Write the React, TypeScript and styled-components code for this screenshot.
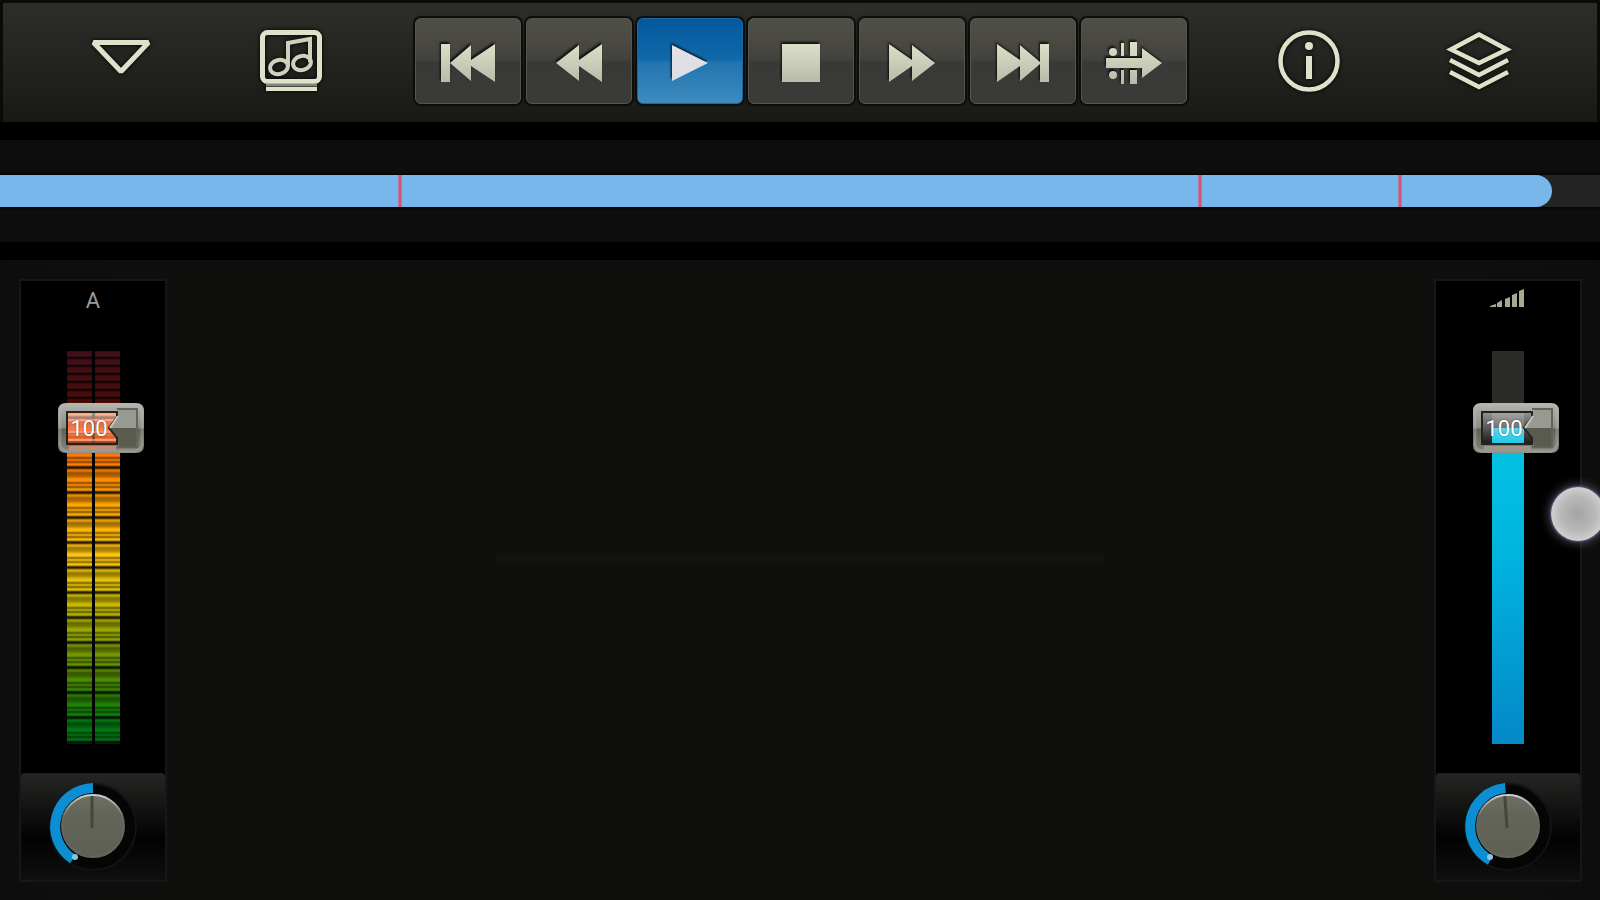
import React, { useState } from "react";
import styled, { createGlobalStyle, css } from "styled-components";

const GlobalStyle = createGlobalStyle`
  *, *::before, *::after { box-sizing: border-box; }
  body {
    margin: 0;
    background: #0d0d0d;
    color: #9c9c9a;
    font-family: Roboto, "Liberation Sans", sans-serif;
  }
  button { font: inherit; color: inherit; }
`;

const Page = styled.div`
  position: relative;
  display: flex;
  flex-direction: column;
  min-height: 100vh;
  overflow: hidden;
`;

/* ---------- toolbar ---------- */

const Toolbar = styled.header`
  display: grid;
  grid-template-columns: 412fr 772fr 410fr;
  height: 122px;
  border: 3px solid #0a0b06;
  border-bottom: 0;
  background: linear-gradient(#2d2e29, #22231e 55%, #181914);
`;

const ToolGroup = styled.div<{ $end?: boolean }>`
  display: flex;
  align-items: center;
  justify-content: space-between;
  padding: ${(p) => (p.$end ? "0 86px 2px 90px" : "0 92px 2px 86px")};
`;

const IconButton = styled.button`
  display: grid;
  place-items: center;
  width: 64px;
  height: 68px;
  padding: 0;
  border: 0;
  background: none;
  cursor: pointer;

  svg {
    overflow: visible;
    filter: drop-shadow(0 0 2px #000);
  }
`;

const Transport = styled.div`
  display: flex;
  align-items: flex-start;
  gap: 5px;
  padding-top: 15px;
`;

const TransportButton = styled.button<{ $active: boolean }>`
  flex: 1;
  display: grid;
  place-items: center;
  height: 86px;
  padding: 4px 0 0;
  border: 1px solid #55554f;
  border-radius: 6px;
  background: linear-gradient(#504f47, #4a4942 25%, #42413c 49%, #393937 51%, #3a3a39);
  box-shadow: 0 0 1px 2px #0c0c0a;
  cursor: pointer;

  ${(p) =>
    p.$active &&
    css`
      border-color: #1568a6;
      background: linear-gradient(#04599c, #1169aa 49%, #2274b0 51%, #3d8bbf);
    `}

  svg {
    overflow: visible;
    filter: drop-shadow(-1px -2px 1px rgba(0, 0, 0, 0.8));
  }
`;

/* ---------- song position ---------- */

const PositionBar = styled.section`
  height: 138px;
  padding: 35px 0;
  border: solid #000;
  border-width: 18px 0;
  background: #0d0d0d;
`;

const PositionTrack = styled.div`
  position: relative;
  height: 32px;
  background: #242424;
  box-shadow: 0 0 2px 1px #000;
`;

const PositionFill = styled.div`
  height: 100%;
  border-radius: 0 16px 16px 0;
  background: #78b7eb;
`;

const Marker = styled.span`
  position: absolute;
  top: 0;
  bottom: 0;
  width: 4px;
  margin-left: -2px;
  background: linear-gradient(90deg, #a48fbd, #cc5673 35% 65%, #a48fbd);
`;

const RangeOverlay = styled.input<{ $vertical?: boolean }>`
  position: absolute;
  inset: 0;
  width: 100%;
  height: 100%;
  margin: 0;
  opacity: 0;
  cursor: pointer;
  ${(p) =>
    p.$vertical &&
    css`
      writing-mode: vertical-lr;
      direction: rtl;
    `}
`;

/* ---------- mixer ---------- */

const Mixer = styled.main`
  flex: 1;
  display: flex;
  justify-content: space-between;
  min-height: 640px;
  padding: 19px 18px 18px 19px;
  background: linear-gradient(90deg, #0d0d0d, #0f0f0d 12%, #0f0f0d 88%, #0d0d0d);
`;

const Stage = styled.div`
  flex: 1;
  display: grid;
  place-items: center;
  padding-bottom: 46px;
`;

const StageLine = styled.div`
  width: 48%;
  height: 8px;
  background: #101310;
`;

const Strip = styled.section`
  display: flex;
  flex-direction: column;
  width: 148px;
  border: 2px solid #171717;
  background: #000;
`;

const StripHead = styled.div`
  display: flex;
  justify-content: center;
  height: 70px;
  padding-top: 8px;
  font-size: 22px;
  line-height: 24px;
`;

const Fader = styled.div`
  position: relative;
  flex: 1;
  width: 86px;
  margin: 0 auto 29px;
`;

const Columns = styled.div`
  display: flex;
  justify-content: center;
  gap: 3px;
  height: 100%;
`;

const LevelColumn = styled.div`
  width: 25px;
  background:
    repeating-linear-gradient(rgba(0, 0, 0, 0.3) 0, rgba(0, 0, 0, 0) 2px 5px, #000 7px, rgba(0, 0, 0, 0.3) 8px) 0 0 / 100% 50px no-repeat,
    repeating-linear-gradient(
      rgba(0, 0, 0, 0.3) 0,
      rgba(0, 0, 0, 0) 3px 5px,
      rgba(0, 0, 0, 0.5) 7px,
      rgba(0, 0, 0, 0) 9px,
      rgba(0, 0, 0, 0.5) 11px,
      rgba(0, 0, 0, 0) 13px 14px,
      rgba(0, 0, 0, 0.85) 16px 17px,
      rgba(0, 0, 0, 0.1) 19px 20px,
      rgba(0, 0, 0, 0.4) 22px,
      rgba(0, 0, 0, 0.3) 25px
    ) 0 50px / 100% 100% no-repeat,
    linear-gradient(
      #42101a,
      #4a0c08 13%,
      #ff4a10 14%,
      #ff7600 26%,
      #ffa400 39%,
      #ffc40c 52%,
      #d8c000 62%,
      #9aa800 71%,
      #649000 80%,
      #2c8400 88%,
      #007c14 95%,
      #006c14
    );
`;

const VolumeColumn = styled.div`
  display: flex;
  align-items: flex-end;
  width: 32px;
  background: #2b2b28;
`;

const VolumeFill = styled.div`
  width: 100%;
  background: linear-gradient(#04c4e4, #00b4de 40%, #0488c8);
`;

const Thumb = styled.div`
  position: absolute;
  left: 8px;
  width: 86px;
  height: 50px;

  svg { display: block; }
`;

const ThumbValue = styled.output`
  position: absolute;
  inset: 0 24px 0 0;
  color: #fff;
  font-size: 22px;
  line-height: 52px;
  text-align: center;
  text-shadow: 0 0 2px rgba(0, 0, 0, 0.5);
`;

const KnobPanel = styled.div`
  position: relative;
  display: grid;
  place-items: center;
  height: 107px;
  padding-bottom: 4px;
  border-top: 2px solid #242424;
  border-radius: 4px 4px 0 0;
  background: linear-gradient(#242422, #141413 30%, #020202 60%, #0f0f0f);
`;

const TouchPoint = styled.div`
  position: absolute;
  top: 487px;
  right: -5px;
  width: 54px;
  height: 54px;
  border-radius: 50%;
  background: radial-gradient(#a4a4a4, #b8b8b8 45%, #cecece 68%);
  box-shadow: 0 0 2px 1px #5c5488, 0 0 10px 3px rgba(120, 118, 135, 0.5);
  pointer-events: none;
`;

/* ---------- drawings ---------- */

const CREAM = "#dfe2ca";

const MenuIcon = () => (
  <svg width="64" height="64" viewBox="0 0 64 64" fill="none" stroke={CREAM} strokeWidth="5">
    <path d="M4.500 12.500H59.500L32 41.500Z" strokeLinejoin="bevel" />
  </svg>
);

const SongIcon = () => (
  <svg width="64" height="64" viewBox="0 0 64 64" fill="none" stroke={CREAM}>
    <rect x="3.500" y="2.500" width="57" height="49" rx="5" strokeWidth="5" />
    <path d="M7 55H58" stroke="#85877a" strokeWidth="3" />
    <path d="M7 59H58" strokeWidth="4" />
    <g stroke="#cfd1bd" strokeWidth="4">
      <ellipse cx="20" cy="37" rx="9" ry="7" transform="rotate(-14 20 37)" />
      <ellipse cx="43" cy="33" rx="9" ry="7" transform="rotate(-14 43 33)" />
      <path d="M29 36V13L51 9V32" />
    </g>
  </svg>
);

const InfoIcon = () => (
  <svg width="64" height="64" viewBox="0 0 64 64" fill="none" stroke={CREAM}>
    <circle cx="32" cy="31" r="28.500" strokeWidth="4.500" />
    <circle cx="32" cy="16" r="4" fill={CREAM} stroke="none" />
    <path d="M32 26V49" strokeWidth="6" />
  </svg>
);

const LayersIcon = () => (
  <svg width="64" height="64" viewBox="0 0 64 64" fill="none" stroke={CREAM} strokeWidth="4.500">
    <path d="M32 4.500L60 19.500L32 33L4 19.500Z" />
    <path d="M3 30L32 45L61 30" />
    <path d="M3 42L32 57L61 42" />
  </svg>
);

const Glyph = ({ width = 54, light, children }: { width?: number; light?: boolean; children: React.ReactNode }) => (
  <svg width={width} height="38" viewBox={`0 0 ${width} 38`} fill={light ? "url(#glyphLight)" : "url(#glyphCream)"}>
    <defs>
      <linearGradient id="glyphCream" gradientUnits="userSpaceOnUse" x1="0" y1="0" x2="0" y2="38">
        <stop offset="0" stopColor="#dcdfc8" />
        <stop offset="1" stopColor="#b9bbaa" />
      </linearGradient>
      <linearGradient id="glyphLight" gradientUnits="userSpaceOnUse" x1="0" y1="0" x2="0" y2="38">
        <stop offset="0" stopColor="#e2e1e6" />
        <stop offset="1" stopColor="#dcdfe6" />
      </linearGradient>
    </defs>
    {children}
  </svg>
);

const transport = [
  { id: "top", label: "Back to start", icon: <Glyph><path d="M0 0H9V38H0ZM9 19L30 1V16L54 0V38L30 22V37Z" /></Glyph> },
  { id: "rewind", label: "Rewind", icon: <Glyph width={46}><path d="M0 19L23 1V16L46 0V38L23 22V37Z" /></Glyph> },
  { id: "play", label: "Play", icon: <Glyph width={36} light><path d="M0 1L36 19L0 37Z" /></Glyph> },
  { id: "stop", label: "Stop", icon: <Glyph width={38}><path d="M0 0H38V38H0Z" /></Glyph> },
  { id: "forward", label: "Fast forward", icon: <Glyph width={46}><path d="M46 19L23 1V16L0 0V38L23 22V37Z" /></Glyph> },
  { id: "end", label: "Go to end", icon: <Glyph width={52}><path d="M52 0H43V38H52ZM43 18L23 1V16L0 0V38L23 22V37L43 20Z" /></Glyph> },
  {
    id: "sync",
    label: "Synchro start",
    icon: (
      <Glyph width={56}>
        <circle cx="7" cy="8" r="4" />
        <circle cx="7" cy="31" r="4" />
        <path d="M15 -1H18V12H15ZM15 26H18V40H15ZM24 -2H31V12H24ZM24 26H31V40H24Z" />
        <path d="M0 14H36V4L56 19L36 34V24H0Z" />
      </Glyph>
    ),
  },
];

const SignalIcon = () => (
  <svg width="36" height="20" viewBox="0 0 36 20" fill="#a9a893" role="img" aria-label="Master volume">
    <path d="M0 17L6 15V18H0ZM7 14L12 11V18H7ZM15 10L20 8V18H15ZM22 6L27 4V18H22ZM29 2L34 0V18H29Z" />
  </svg>
);

const ThumbFrame = ({ tinted }: { tinted?: boolean }) => (
  <svg width="86" height="50" viewBox="0 0 86 50">
    <defs>
      <linearGradient id="metal" x1="0" y1="0" x2="0" y2="1">
        <stop offset="0" stopColor="#b4b5ae" />
        <stop offset="0.500" stopColor="#8b8c85" />
        <stop offset="0.520" stopColor="#5f6057" />
        <stop offset="1" stopColor="#85867c" />
      </linearGradient>
      <linearGradient id="glass" x1="0" y1="0" x2="0" y2="1">
        <stop offset="0" stopColor="#fff" stopOpacity="0.600" />
        <stop offset="1" stopColor="#fff" stopOpacity="0.100" />
      </linearGradient>
    </defs>
    <path d="M9 8H59V14L51 25L59 35V41H9Z" fill="url(#glass)" />
    {tinted && <path d="M9 15H58L51 25L59 36V41H9Z" fill="#ff6030" fillOpacity="0.450" />}
    {tinted && <path d="M9 17H56M9 29H54M9 37H58" stroke="#ffb9a0" strokeOpacity="0.600" strokeWidth="2" />}
    <path
      fillRule="evenodd"
      fill="url(#metal)"
      d="M8 0H78Q86 0 86 8V42Q86 50 78 50H8Q0 50 0 42V8Q0 0 8 0ZM9 9V41H59V35L51 25L59 14V9Z"
    />
    <rect x="2" y="2" width="82" height="46" rx="7" fill="none" stroke="#b9bab2" strokeOpacity="0.400" strokeWidth="3" />
    <path d="M61 7H79V25H52L59 15Z" fill="#999a92" />
    <path d="M52 25H79V43H61L59 35Z" fill="#595b4f" />
    <path d="M59 14L51 25L59 35V41H9V9H59Z" fill="none" stroke="#24241f" strokeWidth="2" />
    <path d="M59 6H79V44H59" fill="none" stroke="#62635b" strokeWidth="2" />
    <path d="M60 13L52 25" stroke="#c9cac2" strokeWidth="2" />
    <path d="M11 45H58" stroke={tinted ? "#c98a78" : "#a0958c"} strokeWidth="4" />
  </svg>
);

const KnobDrawing = ({ turn = 0 }: { turn?: number }) => (
  <svg width="96" height="96" viewBox="0 0 96 96">
    <defs>
      <linearGradient id="cap" x1="0" y1="0" x2="0" y2="1">
        <stop offset="0" stopColor="#6e6e65" />
        <stop offset="0.300" stopColor="#64655a" />
        <stop offset="1" stopColor="#5f6054" />
      </linearGradient>
      <linearGradient id="rim" x1="0" y1="0" x2="0" y2="1">
        <stop offset="0" stopColor="#cfcfcb" />
        <stop offset="0.350" stopColor="#66675c" />
      </linearGradient>
    </defs>
    <circle cx="48" cy="49" r="43" fill="#050505" stroke="#131313" strokeWidth="2" />
    <path d="M48 10A38.500 38.500 0 0 0 28 81" transform={`rotate(${turn} 48 48)`} fill="none" stroke="#0b8fd2" strokeWidth="10" />
    <circle cx="30" cy="79" r="3" fill="#8cc4e6" />
    <circle cx="48" cy="48" r="31" fill="url(#cap)" stroke="url(#rim)" strokeWidth="2" />
    <path d="M47 18V50" transform={`rotate(${turn} 48 50)`} stroke="#45463d" strokeWidth="3" />
  </svg>
);

/* ---------- page ---------- */

const FADER_MAX = 118;
const MARKERS = [25, 75, 87.5];

const Channel = ({ name, head, meter, turn }: { name: string; head: React.ReactNode; meter?: boolean; turn?: number }) => {
  const [level, setLevel] = useState(100);
  const [pan, setPan] = useState(64);
  const gap = 1 - level / FADER_MAX;
  return (
    <Strip aria-label={name}>
      <StripHead>{head}</StripHead>
      <Fader>
        <Columns>
          {meter ? (
            <>
              <LevelColumn />
              <LevelColumn />
            </>
          ) : (
            <VolumeColumn>
              <VolumeFill style={{ height: `calc(${(1 - gap) * 100}% - ${(1 - gap) * 50 - 22 - 20 * gap}px)` }} />
            </VolumeColumn>
          )}
        </Columns>
        <Thumb style={{ top: `calc(${gap * 100}% - ${gap * 50}px)` }}>
          <ThumbFrame tinted={meter} />
          <ThumbValue>{level}</ThumbValue>
        </Thumb>
        <RangeOverlay
          $vertical
          type="range"
          min={0}
          max={FADER_MAX}
          value={level}
          aria-label={`${name} volume`}
          onChange={(e) => setLevel(Number(e.target.value))}
        />
      </Fader>
      <KnobPanel>
        <KnobDrawing turn={(turn ?? 0) + (pan - 64) * 2} />
        <RangeOverlay
          type="range"
          min={0}
          max={127}
          value={pan}
          aria-label={`${name} pan`}
          onChange={(e) => setPan(Number(e.target.value))}
        />
      </KnobPanel>
    </Strip>
  );
};

export default function App() {
  const [active, setActive] = useState("play");
  const [position, setPosition] = useState(97);
  return (
    <Page>
      <GlobalStyle />
      <Toolbar>
        <ToolGroup>
          <IconButton aria-label="Menu"><MenuIcon /></IconButton>
          <IconButton aria-label="Songs"><SongIcon /></IconButton>
        </ToolGroup>
        <Transport>
          {transport.map((t) => (
            <TransportButton key={t.id} $active={t.id === active} aria-label={t.label} onClick={() => setActive(t.id)}>
              {t.icon}
            </TransportButton>
          ))}
        </Transport>
        <ToolGroup $end>
          <IconButton aria-label="Information"><InfoIcon /></IconButton>
          <IconButton aria-label="Layers"><LayersIcon /></IconButton>
        </ToolGroup>
      </Toolbar>

      <PositionBar>
        <PositionTrack>
          <PositionFill style={{ width: `${position}%` }} />
          {MARKERS.map((m) => (
            <Marker key={m} style={{ left: `${m}%` }} />
          ))}
          <RangeOverlay
            type="range"
            min={0}
            max={100}
            value={position}
            aria-label="Song position"
            onChange={(e) => setPosition(Number(e.target.value))}
          />
        </PositionTrack>
      </PositionBar>

      <Mixer>
        <Channel name="Part A" head="A" meter />
        <Stage><StageLine /></Stage>
        <Channel name="Master" head={<SignalIcon />} turn={-4} />
      </Mixer>
      <TouchPoint />
    </Page>
  );
}
